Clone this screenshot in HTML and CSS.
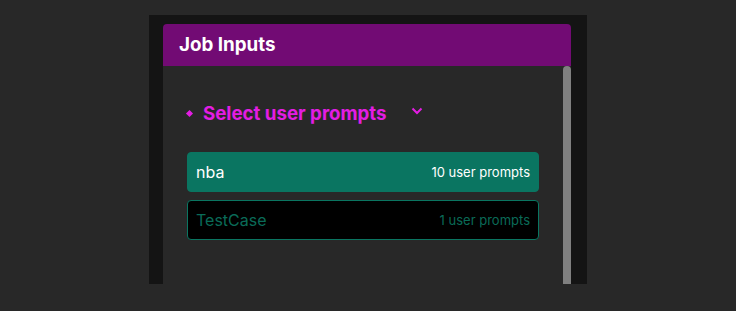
FILE: index.html
```html
<!DOCTYPE html>
<html>
<head>
<meta charset="utf-8">
<link rel="stylesheet" href="styles.css">
</head>
<body>
<div class="panel">
  <div class="card">
    <div class="card-header">Job Inputs</div>
    <div class="card-body">
      <div class="content">
        <div class="select-row">
          <span class="diamond"></span>
          <span class="select-title">Select user prompts</span>
          <svg class="chevron" width="12" height="8" viewBox="0 0 12 8"><path d="M1.5 1.5 L6 6 L10.5 1.5" fill="none" stroke="#e31de3" stroke-width="2"/></svg>
        </div>
        <div class="list">
          <div class="item active"><span class="name">nba</span><span class="count">10 user prompts</span></div>
          <div class="item"><span class="name">TestCase</span><span class="count">1 user prompts</span></div>
        </div>
      </div>
      <div class="scrollbar"><div class="thumb"></div></div>
    </div>
  </div>
</div>
</body>
</html>
```

FILE: styles.css
```css
html, body {
  margin: 0;
  padding: 0;
  background: #282828;
  font-family: Inter, "Noto Sans", sans-serif;
}
body {
  padding: 15px 149px 0;
  height: 311px;
  box-sizing: border-box;
}
.panel {
  background: #141414;
  width: 438px;
  height: 269px;
  padding: 9px 16px 0 14px;
  box-sizing: border-box;
  overflow: hidden;
}
.card {
  display: flex;
  flex-direction: column;
  height: 100%;
}
.card-header {
  background: #720b74;
  height: 42px;
  border-radius: 4px 4px 0 0;
  color: #fff;
  font-weight: 700;
  font-size: 18.8px;
  line-height: 42px;
  padding-left: 16px;
}
.card-body {
  flex: 1;
  background: #282828;
  display: flex;
}
.content {
  flex: 1;
  padding: 36px 24px 0 24px;
}
.select-row {
  display: flex;
  align-items: center;
  height: 22px;
}
.diamond {
  width: 5px;
  height: 5px;
  background: #e31de3;
  transform: rotate(45deg);
  margin: 0 11px 0 0;
}
.select-title {
  color: #e31de3;
  font-weight: 700;
  font-size: 18.7px;
}
.chevron {
  margin-left: 24px;
  margin-top: -4px;
}
.list {
  margin-top: 28px;
  display: flex;
  flex-direction: column;
  gap: 8px;
}
.item {
  height: 40px;
  box-sizing: border-box;
  border: 1px solid #0a7561;
  border-radius: 4px;
  background: #000;
  display: flex;
  align-items: center;
  justify-content: space-between;
  padding: 0 8px;
  color: #0a6b58;
}
.item.active {
  background: #0a7561;
  color: #fff;
}
.name {
  font-size: 16px;
}
.count {
  font-size: 13px;
}
.scrollbar {
  width: 8px;
  display: flex;
}
.thumb {
  flex: 1;
  background: #808080;
  border-radius: 4px 4px 0 0;
}
```
